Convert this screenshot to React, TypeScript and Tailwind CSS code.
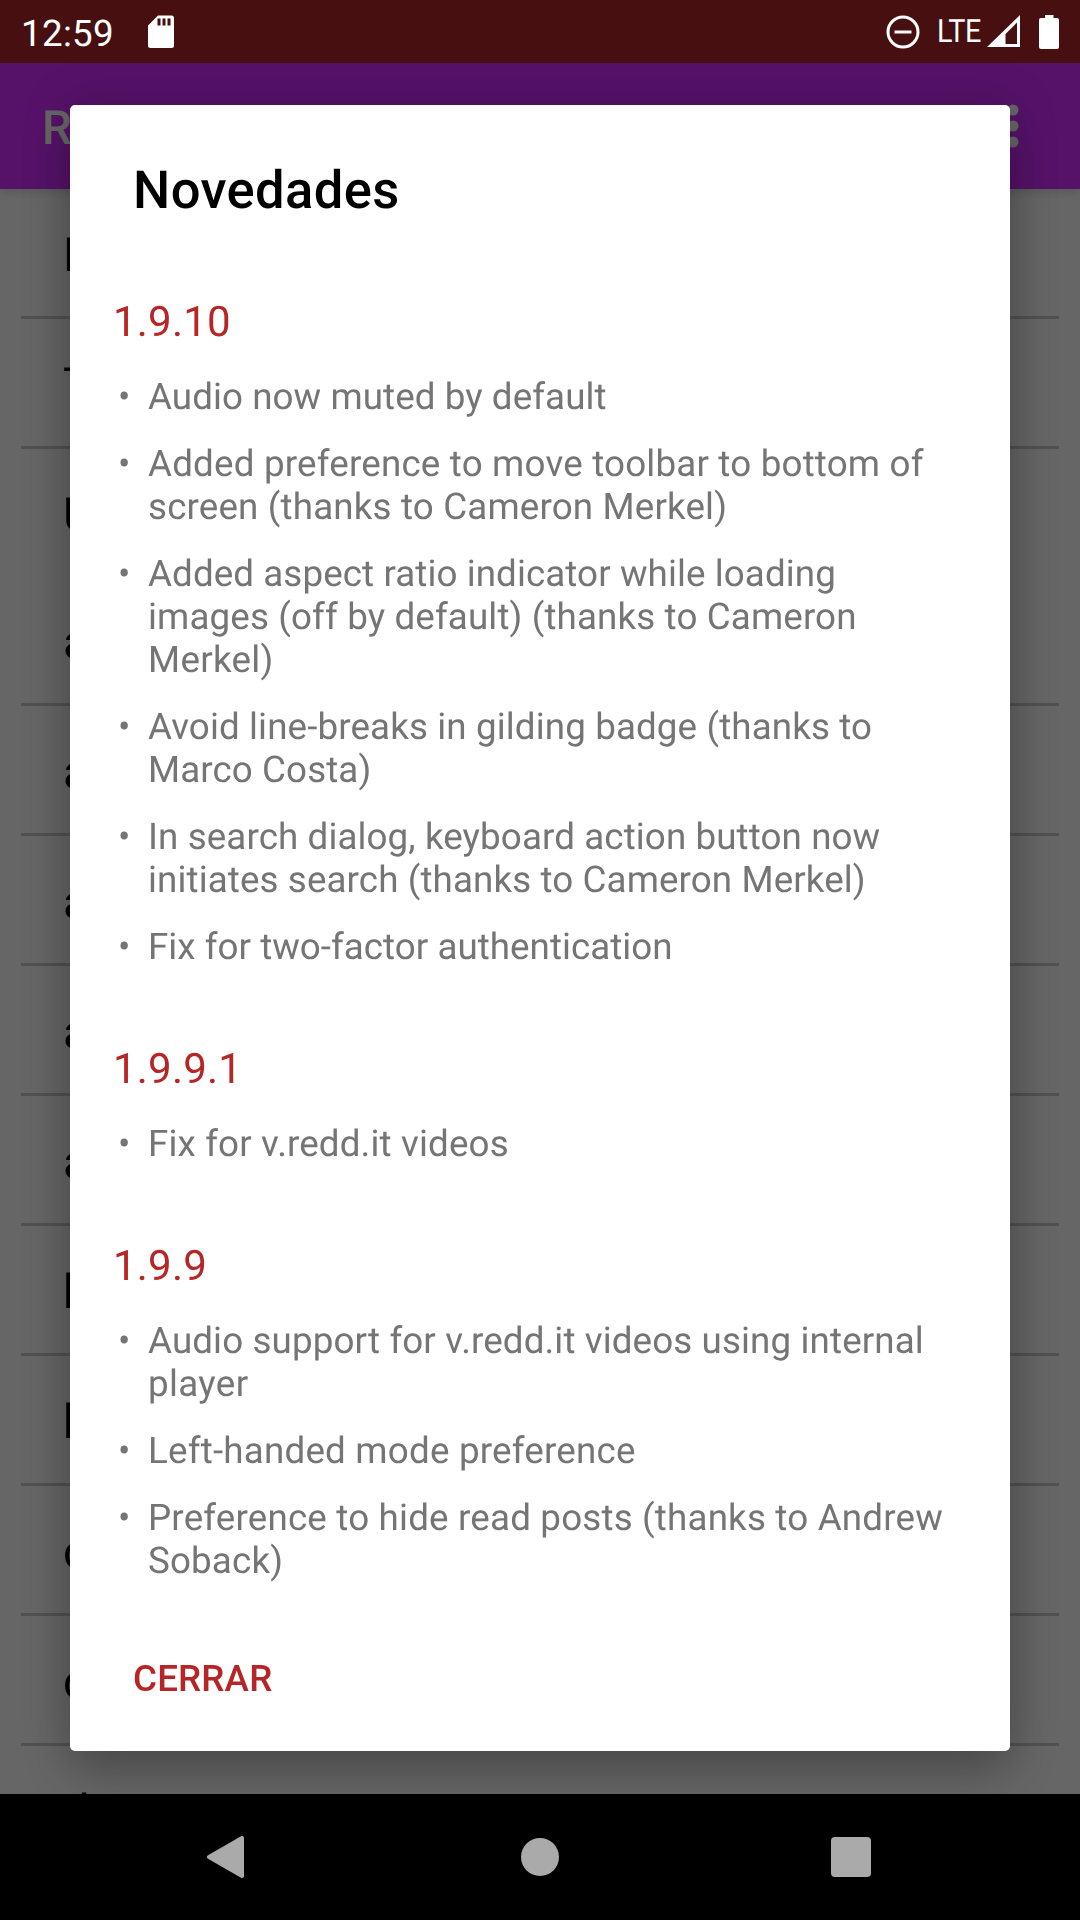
import React from "react";

type Line = { text: string; spacing: number };

const SECTIONS: { version: string; items: Line[][] }[] = [
  {
    version: "1.9.10",
    items: [
      [{ text: "Audio now muted by default", spacing: 0.07 }],
      [
        { text: "Added preference to move toolbar to bottom of", spacing: 0.19 },
        { text: "screen (thanks to Cameron Merkel)", spacing: 0.16 },
      ],
      [
        { text: "Added aspect ratio indicator while loading", spacing: 0.09 },
        { text: "images (off by default) (thanks to Cameron", spacing: 0.13 },
        { text: "Merkel)", spacing: 0.3 },
      ],
      [
        { text: "Avoid line-breaks in gilding badge (thanks to", spacing: 0.12 },
        { text: "Marco Costa)", spacing: 0.1 },
      ],
      [
        { text: "In search dialog, keyboard action button now", spacing: 0.1 },
        { text: "initiates search (thanks to Cameron Merkel)", spacing: 0.11 },
      ],
      [{ text: "Fix for two-factor authentication", spacing: 0.03 }],
    ],
  },
  { version: "1.9.9.1", items: [[{ text: "Fix for v.redd.it videos", spacing: 0.15 }]] },
  {
    version: "1.9.9",
    items: [
      [
        { text: "Audio support for v.redd.it videos using internal", spacing: 0.12 },
        { text: "player", spacing: 0.35 },
      ],
      [{ text: "Left-handed mode preference", spacing: 0.21 }],
      [
        { text: "Preference to hide read posts (thanks to Andrew", spacing: 0.18 },
        { text: "Soback)", spacing: 0.15 },
      ],
    ],
  },
];

const ROWS = [
  { label: "P", divider: true },
  { label: "T", divider: true },
  { label: "U", divider: false },
  { label: "a", divider: true },
  { label: "a", divider: true },
  { label: "a", divider: true },
  { label: "a", divider: true },
  { label: "a", divider: true },
  { label: "b", divider: true },
  { label: "b", divider: true },
  { label: "c", divider: true },
  { label: "c", divider: true },
  { label: "d", divider: true },
];

function StatusBar() {
  return (
    <header className="flex h-[63px] items-center bg-[#470f0f] text-white">
      <span className="ml-[21px] w-[92px] pt-[3px] text-[36.75px] leading-[43px] tracking-[0.3px] whitespace-nowrap">12:59</span>
      <svg className="ml-[34px] h-[34px] w-[28px]" viewBox="0 0 28 34" fill="currentColor">
        <path fillRule="evenodd" d="M11 .5h13.500a2.500 2.500 0 0 1 2.500 2.500v27.500a2.500 2.500 0 0 1-2.500 2.500H3.500A2.500 2.500 0 0 1 1 30.500V10.500zM10.500 3.500v7h3v-7zM15.500 3.500v7h3v-7zM20.500 3.500v7h3v-7z" />
      </svg>
      <div className="ml-auto flex items-center">
        <svg className="h-[34px] w-[34px]" viewBox="0 0 34 34" fill="none" stroke="currentColor" strokeWidth="3">
          <circle cx="17" cy="17" r="15" />
          <path d="M8.500 17h17" />
        </svg>
        <span className="ml-[17px] w-[47px] origin-left scale-x-[0.9] text-[32px] leading-[43px] tracking-[-0.5px]">LTE</span>
        <svg className="ml-[3px] h-[34px] w-[34px]" viewBox="0 0 34 34" fill="currentColor">
          <path fillRule="evenodd" d="M33 0v32H0zM30 7.500L18.500 19v10H30z" />
        </svg>
        <svg className="mr-[21px] ml-[18px] h-[34px] w-[20px]" viewBox="0 0 20 34" fill="currentColor">
          <path d="M6 0h8.500v3H18a2 2 0 0 1 2 2v27a2 2 0 0 1-2 2H2a2 2 0 0 1-2-2V5a2 2 0 0 1 2-2h4z" />
        </svg>
      </div>
    </header>
  );
}

function SubredditScreen() {
  return (
    <div className="h-[1731px] overflow-hidden bg-[#666666]">
      <div className="relative flex h-[126px] items-center bg-[#561269] pl-[42px] text-[#666666] shadow-[0_3px_9px_rgba(0,0,0,0.14)]">
        <span className="pt-[4px] text-[47.25px] leading-[56px] font-medium">R</span>
        <svg className="mr-[61px] ml-auto h-[44px] w-[12px]" viewBox="0 0 12 44" fill="currentColor">
          <circle cx="6" cy="6" r="5.500" />
          <circle cx="6" cy="22" r="5.500" />
          <circle cx="6" cy="38" r="5.500" />
        </svg>
      </div>
      {ROWS.map((row, index) => (
        <div
          key={index}
          className={
            row.divider
              ? "mx-[21px] flex h-[130px] items-center border-b-[3px] border-[#515151] pt-[5px] pl-[42px]"
              : "mx-[21px] flex h-[127px] items-center pt-[5px] pl-[42px]"
          }
        >
          <span className="text-[47.25px] leading-[56px] text-black will-change-transform">{row.label}</span>
        </div>
      ))}
    </div>
  );
}

function ChangelogDialog() {
  return (
    <section
      role="dialog"
      className="absolute top-[42px] left-[70px] flex h-[1646px] w-[940px] flex-col rounded-[5px] bg-white shadow-[0_24px_48px_rgba(0,0,0,0.2),0_0_50px_rgba(0,0,0,0.18)]"
    >
      <h1 className="mt-[54px] ml-[63px] text-[52.5px] leading-[62px] font-medium tracking-[0.4px] text-black">Novedades</h1>
      <div className="mt-[71px] ml-[42px]">
        {SECTIONS.map((section) => (
          <div key={section.version} className="mb-[71px]">
            <h2 className="mb-[22px] ml-px text-[42px] leading-[61px] tracking-[0.2px] text-[#b72626]">{section.version}</h2>
            <ul className="flex flex-col gap-[24px]">
              {section.items.map((lines) => (
                <li key={lines[0].text} className="flex text-[36.75px] leading-[43px] text-[#757575]">
                  <span className="w-[36px] pl-[6px]">•</span>
                  <p>
                    {lines.map((line) => (
                      <span key={line.text} className="block whitespace-nowrap" style={{ letterSpacing: line.spacing }}>
                        {line.text}
                      </span>
                    ))}
                  </p>
                </li>
              ))}
            </ul>
          </div>
        ))}
      </div>
      <button className="mt-[4px] ml-[63px] self-start text-[36.75px] leading-[43px] font-medium tracking-[0.15px] text-[#b72626]">CERRAR</button>
    </section>
  );
}

function NavigationBar() {
  return (
    <nav className="relative flex h-[126px] items-center bg-black text-[#aaaaaa]">
      <svg className="ml-[206px] h-[44px] w-[38px]" viewBox="0 0 38 44" fill="currentColor" stroke="currentColor" strokeWidth="4" strokeLinejoin="round">
        <path d="M36 3v38L3 22z" />
      </svg>
      <span className="ml-[277px] size-[38px] rounded-full bg-[#aaaaaa]" />
      <span className="ml-[272px] size-[40px] rounded-[4px] bg-[#aaaaaa]" />
    </nav>
  );
}

export default function App() {
  return (
    <main className="h-[1920px] w-[1080px] overflow-hidden font-[Roboto,sans-serif] antialiased [text-rendering:geometricPrecision]">
      <StatusBar />
      <div className="relative overflow-hidden">
        <SubredditScreen />
        <ChangelogDialog />
      </div>
      <NavigationBar />
    </main>
  );
}
